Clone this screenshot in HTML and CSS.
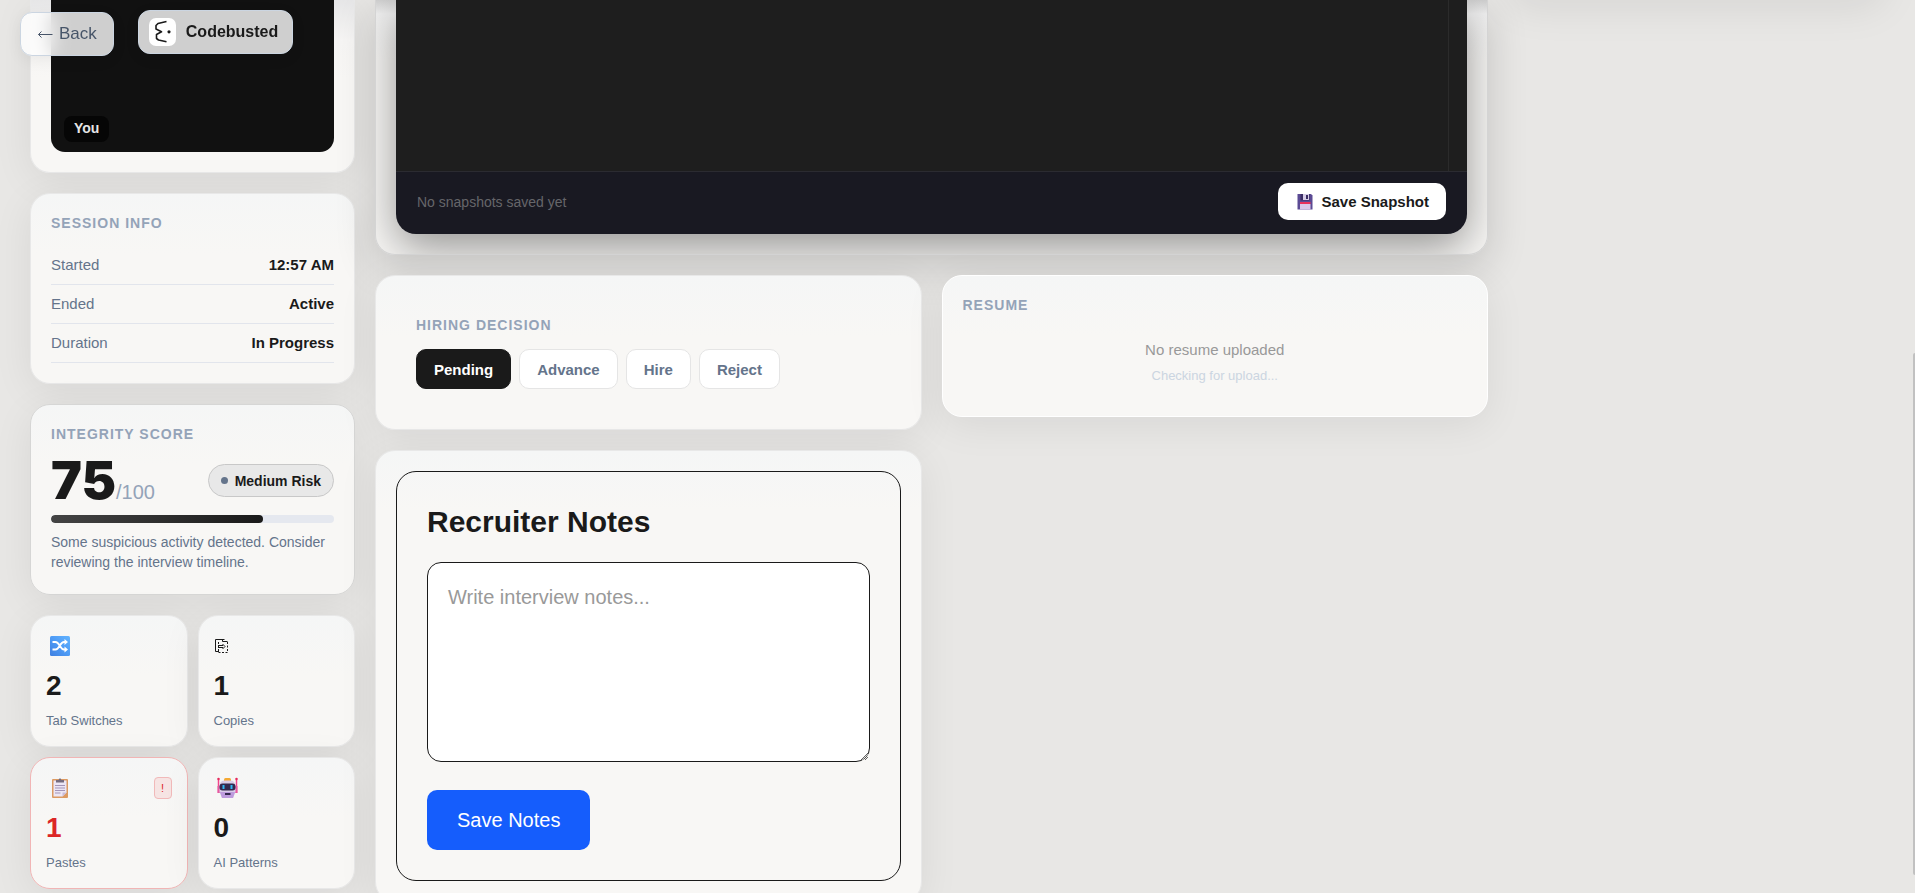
FILE: index.html
```html
<!DOCTYPE html>
<html lang="en">
<head>
<meta charset="utf-8">
<title>Codebusted – Interview Session</title>
<link rel="stylesheet" href="styles.css">
</head>
<body>
<nav class="topbar">
  <button class="back" type="button"><svg class="arrow" viewBox="0 0 16 12" aria-hidden="true"><path d="M15.500 6.500H1.500M4.500 3.500L1.500 6.500L4.500 9.500"/></svg>Back</button>
  <a class="brand" href="#">
    <svg class="logo" viewBox="0 0 27 28" aria-hidden="true"><path d="M17.500 3.500L9 5.500L7 7.500V11L12.500 13.800L7.500 16.500V20.500L9.500 22L17.500 23.800" fill="none" stroke="#1a1a1a" stroke-width="1.600" stroke-linejoin="round"/><circle cx="20" cy="13.800" r="1.600" fill="#1a1a1a"/></svg>
    Codebusted
  </a>
</nav>

<main class="page">
  <aside class="column">
    <section class="card video-card">
      <div class="video"><span class="video-name">You</span></div>
    </section>

    <section class="card session">
      <h2 class="label">SESSION INFO</h2>
      <dl class="rows">
        <div class="row"><dt>Started</dt><dd>12:57 AM</dd></div>
        <div class="row"><dt>Ended</dt><dd>Active</dd></div>
        <div class="row"><dt>Duration</dt><dd>In Progress</dd></div>
      </dl>
    </section>

    <section class="card integrity">
      <h2 class="label">INTEGRITY SCORE</h2>
      <div class="score-row">
        <div class="score"><strong>75</strong><span>/100</span></div>
        <span class="risk"><i class="dot"></i>Medium Risk</span>
      </div>
      <div class="bar"><div class="bar-fill" style="width:75%"></div></div>
      <p class="summary">Some suspicious activity detected. Consider reviewing the interview timeline.</p>
    </section>

    <div class="stats">
      <article class="card stat">
        <div class="stat-top">
          <svg class="emoji" viewBox="0 0 28 28" aria-hidden="true"><defs><linearGradient id="blue" x1="0" y1="1" x2="1" y2="0"><stop offset="0" stop-color="#3f7fe0"/><stop offset=".5" stop-color="#4e9bf5"/><stop offset="1" stop-color="#62b4ff"/></linearGradient></defs><rect x="4" y="4" width="20" height="20" rx="1.500" fill="url(#blue)"/><path d="M6.500 10H9.500C13.500 10 14 17.500 18 17.500H20M6.500 17.500H9.500C13.500 17.500 14 10 18 10H20" fill="none" stroke="#fff" stroke-width="1.800"/><path d="M18.500 7L22 10L18.500 13ZM18.500 14.500L22 17.500L18.500 20.500Z" fill="#fff"/></svg>
        </div>
        <strong class="stat-value">2</strong>
        <span class="stat-label">Tab Switches</span>
      </article>
      <article class="card stat">
        <div class="stat-top">
          <svg class="emoji" viewBox="0 0 28 28" aria-hidden="true"><g fill="none" stroke="#1a1a1a"><path d="M10.500 7.500H1.500V19.500H5M8.500 7.500V9.500H13.500"/><path d="M13.500 10V20.500H4.500V9.500" stroke-dasharray="2 1.500"/><path d="M4 13.500H9M4 15.500H9M8.500 12L11 14.500L8.500 17"/></g></svg>
        </div>
        <strong class="stat-value">1</strong>
        <span class="stat-label">Copies</span>
      </article>
      <article class="card stat alert">
        <div class="stat-top">
          <svg class="emoji" viewBox="0 0 28 28" aria-hidden="true"><rect x="6" y="5" width="16" height="19" rx="1" fill="#dc9a62"/><path d="M7.500 6.500H20.500V18.500L16.500 22.500H7.500Z" fill="#ece6f4"/><path d="M20.500 18.500H16.500V22.500Z" fill="#c9bcd9"/><path d="M10 8.500V6H12.500Q14 2.500 15.500 6H18V8.500Z" fill="#756b7d"/><path d="M9 11.500H19M9 14H19M9 16.500H19M9 19H14.500" stroke="#a395b8"/></svg>
          <span class="flag">!</span>
        </div>
        <strong class="stat-value">1</strong>
        <span class="stat-label">Pastes</span>
      </article>
      <article class="card stat">
        <div class="stat-top">
          <svg class="emoji" viewBox="0 0 28 28" aria-hidden="true"><path d="M4.500 4V19M22.500 4V19" stroke="#f2458c" stroke-width="1.500"/><circle cx="4.500" cy="5" r="1.200" fill="#e62a5a"/><circle cx="22.500" cy="5" r="1.200" fill="#e62a5a"/><path d="M3.500 12H6V19H3.500ZM21 12H23.500V19H21Z" fill="#e65aa0"/><rect x="10" y="4" width="7" height="4" rx="1.500" fill="#f4a933"/><path d="M5.500 12Q5.500 6.500 11 6.500H16Q21.500 6.500 21.500 12V18L19 24H8L5.500 18Z" fill="#d9cde9"/><path d="M6 18H21L19 24H8Z" fill="#bd9bdd"/><rect x="5.500" y="9.500" width="16" height="7" rx="3" fill="#34294f"/><path d="M9.500 11V15M17.500 11V15" stroke="#31b7f4" stroke-width="2"/><rect x="11" y="19" width="5.500" height="2" fill="#34294f"/></svg>
        </div>
        <strong class="stat-value">0</strong>
        <span class="stat-label">AI Patterns</span>
      </article>
    </div>
  </aside>

  <div class="column">
    <section class="card editor-card">
      <div class="editor">
        <div class="code"><div class="minimap"></div></div>
        <footer class="editor-foot">
          <span>No snapshots saved yet</span>
          <button class="snapshot" type="button"><svg class="floppy" viewBox="0 0 16 16" aria-hidden="true"><path d="M.5 0H14L15.500 1.500V15.500H.5Z" fill="#5b4a94"/><path d="M3.500 0H12.500V6.500H3.500Z" fill="#3a2d63"/><path d="M6 0H12V6H6Z" fill="#d6cde6"/><path d="M9 1H11V5H9Z" fill="#3a2d63"/><path d="M3 8H13.500V10H3Z" fill="#e8315b"/><path d="M3 10H13.500V15.500H3Z" fill="#d9c8ea"/></svg>Save Snapshot</button>
        </footer>
      </div>
    </section>

    <div class="split">
      <div class="column">
        <section class="card hiring">
          <h2 class="label">HIRING DECISION</h2>
          <div class="choices">
            <button class="choice selected" type="button">Pending</button>
            <button class="choice" type="button">Advance</button>
            <button class="choice" type="button">Hire</button>
            <button class="choice" type="button">Reject</button>
          </div>
        </section>
        <section class="card notes-card">
          <div class="notes">
            <h2 class="notes-title" id="notes-title">Recruiter Notes</h2>
            <textarea class="notes-input" aria-labelledby="notes-title" placeholder="Write interview notes..."></textarea>
            <button class="save" type="button">Save Notes</button>
          </div>
        </section>
      </div>
      <section class="card resume">
        <h2 class="label">RESUME</h2>
        <div class="empty">
          <p class="empty-title">No resume uploaded</p>
          <p class="empty-hint">Checking for upload...</p>
        </div>
      </section>
    </div>
  </div>

  <aside class="rail"></aside>
</main>
<div class="scroll-thumb"></div>
</body>
</html>
```
FILE: styles.css
```css
* { box-sizing: border-box; }

body {
  margin: 0;
  height: 100vh;
  overflow: hidden;
  background: #e8e7e5;
  color: #1a1a1a;
  font-family: "Liberation Sans", Arial, sans-serif;
}

h2, p, dl, dd { margin: 0; }

button, textarea { font-family: inherit; }

.topbar {
  position: fixed;
  top: 10px;
  left: 20px;
  z-index: 10;
  display: flex;
  align-items: flex-start;
  gap: 24px;
}

.back, .brand {
  display: flex;
  align-items: center;
  height: 44px;
  border: 1px solid #cbd5e1;
  border-radius: 12px;
  background: rgba(255, 255, 255, .8);
  backdrop-filter: blur(10px);
  box-shadow: 0 4px 16px rgba(0, 0, 0, .06);
}

.back {
  margin-top: 2px;
  padding: 0 16px;
  gap: 6px;
  color: #475569;
  font-size: 17px;
}

.arrow {
  width: 16px;
  height: 12px;
  fill: none;
  stroke: #475569;
}

.brand {
  padding: 0 14px 0 10px;
  gap: 10px;
  color: #1a1a1a;
  font-size: 16px;
  font-weight: 700;
  text-decoration: none;
}

.logo {
  width: 27px;
  height: 28px;
  border-radius: 7px;
  background: #fff;
}

.page {
  display: grid;
  grid-template-columns: 325px minmax(0, 1fr) 377px;
  align-items: start;
  gap: 20px;
  padding: 0 30px;
}

.column {
  display: flex;
  flex-direction: column;
  gap: 20px;
}

.card {
  padding: 20px;
  border: 1px solid #e8e8e8;
  border-radius: 20px;
  background: linear-gradient(#f5f6f6, #f8f7f5 60px);
  box-shadow: 0 8px 40px rgba(0, 0, 0, .07);
}

.label {
  color: #94a3b8;
  font-size: 14px;
  line-height: 18px;
  letter-spacing: 1px;
}

.video-card {
  padding-top: 0;
  border-top: 0;
  border-radius: 0 0 20px 20px;
  background: linear-gradient(#e6e6e7, #f6f5f4 40px, #f8f7f5 80px);
}

.video {
  display: flex;
  align-items: flex-end;
  height: 152px;
  padding: 10px 13px;
  border-radius: 0 0 14px 14px;
  background: #111;
}

.video-name {
  padding: 3px 10px 5px;
  border-radius: 8px;
  background: #060606;
  color: #e5e5e5;
  font-size: 14px;
  font-weight: 700;
  line-height: 18px;
}

.rows { margin-top: 14px; }

.row {
  display: flex;
  justify-content: space-between;
  padding: 10px 0;
  border-bottom: 1px solid #e2e5ec;
  font-size: 15px;
  line-height: 18px;
}

.row dt { color: #64748b; }

.row dd { font-weight: 700; }

.integrity { border-color: #d6d6d5; }

.score-row {
  display: flex;
  align-items: center;
  justify-content: space-between;
  height: 72px;
  padding-top: 3px;
}

.score {
  display: flex;
  align-items: baseline;
}

.score strong {
  font-family: Inter, "Liberation Sans", sans-serif;
  font-size: 52px;
  font-weight: 900;
  line-height: 60px;
}

.score span {
  color: #94a3b8;
  font-size: 20px;
}

.risk {
  display: flex;
  align-items: center;
  gap: 7px;
  height: 33px;
  padding: 0 12px;
  border: 1px solid #c8c8c8;
  border-radius: 17px;
  background: #e8e8e8;
  font-size: 14px;
  font-weight: 700;
}

.dot {
  width: 7px;
  height: 7px;
  border-radius: 50%;
  background: #64748b;
}

.bar {
  height: 8px;
  overflow: hidden;
  border-radius: 4px;
  background: #e5e8ef;
}

.bar-fill {
  height: 100%;
  border-radius: 4px;
  background: linear-gradient(90deg, #444, #1a1a1a);
}

.summary {
  margin: 9px 0 2px;
  color: #64748b;
  font-size: 14px;
  line-height: 20px;
}

.stats {
  display: grid;
  grid-template-columns: 1fr 1fr;
  gap: 10px;
}

.stat {
  display: flex;
  flex-direction: column;
  gap: 10px;
  padding: 16px 15px;
}

.stat-top {
  display: flex;
  align-items: center;
  justify-content: space-between;
}

.emoji {
  width: 28px;
  height: 28px;
}

.stat-value {
  font-size: 28px;
  line-height: 32px;
}

.stat-label {
  color: #64748b;
  font-size: 13px;
  line-height: 18px;
}

.alert { border-color: #f1b5b5; }

.alert .stat-value { color: #dc2626; }

.flag {
  width: 18px;
  height: 22px;
  border: 1px solid #f1b9b9;
  border-radius: 4px;
  background: #f6e4e3;
  color: #dc2626;
  font-size: 11px;
  line-height: 20px;
  text-align: center;
}

.editor-card {
  padding-top: 0;
  overflow: hidden;
  border-top: 0;
  border-color: #d4d4d4;
  border-radius: 0 0 20px 20px;
  background: linear-gradient(#d0d0d0, #f2f2f2 14px, #f8f7f5 60px);
  box-shadow: 0 12px 40px rgba(0, 0, 0, .16);
}

.editor {
  border-radius: 0 0 20px 20px;
  background: #191922;
  box-shadow: 0 14px 44px rgba(0, 0, 0, .4);
}

.code {
  display: flex;
  justify-content: flex-end;
  height: 171px;
  background: #1e1e1e;
}

.minimap {
  width: 19px;
  border-left: 1px solid #2b2b2b;
}

.editor-foot {
  display: flex;
  align-items: center;
  justify-content: space-between;
  height: 63px;
  padding: 0 21px 3px;
  border-top: 1px solid #2b2b31;
  color: #66666a;
  font-size: 14px;
}

.snapshot {
  display: flex;
  align-items: center;
  gap: 8px;
  height: 37px;
  padding: 0 17px 0 19px;
  border: 0;
  border-radius: 10px;
  background: #fff;
  color: #1a1a1a;
  font-size: 15px;
  font-weight: 700;
}

.floppy {
  width: 16px;
  height: 16px;
}

.split {
  display: grid;
  grid-template-columns: 1fr 1fr;
  align-items: start;
  gap: 20px;
}

.hiring { padding: 40px; }

.choices {
  display: flex;
  gap: 8px;
  margin-top: 15px;
}

.choice {
  height: 40px;
  padding: 0 17px;
  border: 1px solid #e5e5e5;
  border-radius: 10px;
  background: #fff;
  color: #64748b;
  font-size: 15px;
  font-weight: 700;
}

.selected {
  border-color: #1a1a1a;
  background: #1a1a1a;
  color: #fff;
}

.notes {
  display: flex;
  flex-direction: column;
  align-items: flex-start;
  padding: 32px 30px 30px;
  border: 1px solid #1a1a1a;
  border-radius: 20px;
}

.notes-title {
  margin-bottom: 22px;
  font-size: 30px;
  line-height: 36px;
}

.notes-input {
  width: 100%;
  height: 200px;
  margin-bottom: 28px;
  padding: 20px;
  border: 1px solid #1a1a1a;
  border-radius: 14px;
  background: #fff;
  color: #1a1a1a;
  font-size: 20px;
  line-height: 28px;
}

.notes-input::placeholder { color: #999; }

.save {
  height: 60px;
  padding: 0 30px;
  border: 0;
  border-radius: 10px;
  background: #155dfc;
  color: #fff;
  font-size: 20px;
}

.resume { border-color: #fff; }

.empty {
  margin-top: 15px;
  padding: 12px 0;
  text-align: center;
}

.empty-title {
  color: #999;
  font-size: 15px;
  line-height: 18px;
}

.empty-hint {
  margin-top: 9px;
  color: #cbd5e1;
  font-size: 13px;
  line-height: 16px;
}

.rail {
  height: 60px;
  margin-top: -60px;
  border-radius: 20px;
  box-shadow: 0 8px 40px rgba(0, 0, 0, .08);
}

.scroll-thumb {
  position: fixed;
  top: 353px;
  right: 0;
  bottom: 18px;
  width: 2px;
  border-radius: 2px 0 0 2px;
  background: #c1c1c1;
}
```
